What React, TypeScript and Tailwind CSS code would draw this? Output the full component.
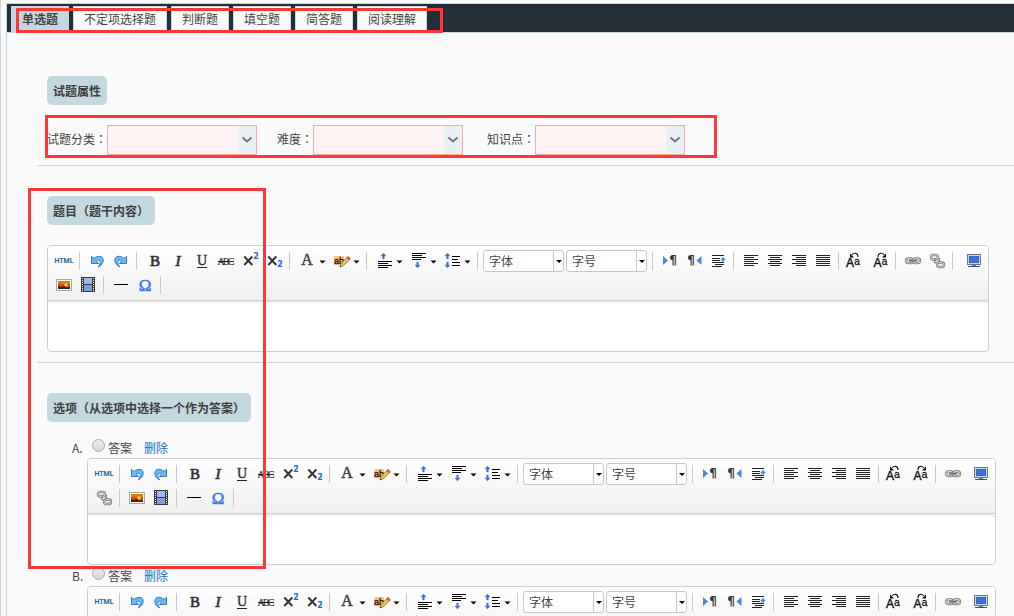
import type { ReactNode } from "react";

const TABS = ["单选题", "不定项选择题", "判断题", "填空题", "简答题", "阅读理解"];

const SERIF = '"Liberation Serif", serif';
const SANS = '"Liberation Sans", sans-serif';
const DEJAVU = '"DejaVu Sans", sans-serif';
const INK = "#333";

function Glyph({ children, crisp, wide }: { children: ReactNode; crisp?: boolean; wide?: boolean }) {
  return (
    <svg
      width={wide ? 34 : 24}
      height={24}
      viewBox={wide ? "0 0 34 24" : "0 0 24 24"}
      fill="none"
      shapeRendering={crisp ? "crispEdges" : undefined}
      aria-hidden="true"
    >
      {children}
      {wide && <path d="M24.500 11.500h6l-3 3z" fill="#000" />}
    </svg>
  );
}

function Lines({ rows, color = "#222" }: { rows: [number, number, number][]; color?: string }) {
  return (
    <>
      {rows.map(([x, y, w]) => (
        <rect key={y} x={x} y={y} width={w} height={1} fill={color} shapeRendering="crispEdges" />
      ))}
    </>
  );
}

const arrowUp = (x: number, y: number) => (
  <path d={`M${x} ${y}l2.5 3h-1.7v3h-1.6v-3h-1.7z`} fill="#4471cf" stroke="#4471cf" strokeWidth=".4" />
);
const arrowDown = (x: number, y: number) => (
  <path d={`M${x} ${y}l2.5-3h-1.7v-3h-1.6v3h-1.7z`} fill="#4471cf" stroke="#4471cf" strokeWidth=".4" />
);

const undoShape = (
  <path
    d="M6.500 7.300v7.200h7.200l-2.600-2.200c1.800-1.700 4.600-1.200 4.100 1.200-.2 1.400-.7 2.700-1.900 4.500 3-1.500 4.900-4.200 4.900-6.800 0-4.600-5.300-5.100-9.300-1.700z"
    fill="#6fb6ee"
    stroke="#2b7fc9"
    strokeWidth="1"
    strokeLinejoin="round"
  />
);

type Tool = { name: string; icon: ReactNode; wide?: boolean };

const t = (name: string, icon: ReactNode, crisp = false): Tool => ({
  name,
  icon: <Glyph crisp={crisp}>{icon}</Glyph>,
});
const w = (name: string, icon: ReactNode): Tool => ({ name, wide: true, icon: <Glyph wide>{icon}</Glyph> });

const letter = (s: string, x: number, y: number, size: number, o: Record<string, unknown> = {}) => (
  <text x={x} y={y} fontSize={size} fontFamily={SERIF} fill={INK} textAnchor="middle" {...o}>
    {s}
  </text>
);

const cross = <path d="M6.300 7.500l8 8.500M14.300 7.500l-8 8.500" stroke={INK} strokeWidth="1.900" />;

const chainLink = (x: number, y: number) => (
  <>
    <rect x={x} y={y} width="7" height="4.500" rx="2.200" stroke="#777" strokeWidth="2.400" />
    <rect x={x} y={y} width="7" height="4.500" rx="2.200" stroke="#e6e6e6" strokeWidth=".9" />
  </>
);

const source: Tool = {
  name: "源代码",
  icon: <span className="font-[Roboto,sans-serif] text-[7px] font-bold leading-none text-[#2a6596]">HTML</span>,
};

const history = [
  t("撤销", undoShape),
  t("重做", <g transform="matrix(-1 0 0 1 24 0)">{undoShape}</g>),
];

const textStyles = [
  t("加粗", letter("B", 13, 17, 15, { stroke: INK, strokeWidth: 0.7 })),
  t("斜体", letter("I", 12, 17, 15, { fontStyle: "italic", stroke: INK, strokeWidth: 0.7 })),
  t("下划线", <>{letter("U", 12, 16, 14, { stroke: INK, strokeWidth: 0.4 })}<Lines rows={[[7, 18, 10]]} /></>),
  t(
    "删除线",
    <>
      {letter("A", 7, 16, 10, { stroke: INK, strokeWidth: 0.2 })}
      {letter("B", 12, 16, 10, { stroke: INK, strokeWidth: 0.2 })}
      {letter("C", 17, 16, 10, { stroke: INK, strokeWidth: 0.2 })}
      <Lines rows={[[4, 12, 16]]} />
    </>,
  ),
  t("上标", <>{cross}{letter("2", 18, 10, 8, { fontFamily: DEJAVU, fontWeight: 700, fill: "#2f5fdc" })}</>),
  t("下标", <>{cross}{letter("2", 18, 18, 8, { fontFamily: DEJAVU, fontWeight: 700, fill: "#2f5fdc" })}</>),
];

const colours = [
  w("文字颜色", letter("A", 12, 16, 16, { fill: "#444", stroke: "#444", strokeWidth: 0.5 })),
  w(
    "背景颜色",
    <>
      <rect x="5" y="7" width="10" height="9" fill="#ffc670" />
      {letter("ab", 10, 15, 9, { fontFamily: SANS, stroke: "#111", strokeWidth: 0.3, fill: "#111" })}
      <path d="M11 18l1-3.500 6-6 2.300 2.300-6 6z" fill="#f0c24c" stroke="#80621c" strokeWidth=".7" />
      <path d="M18 8.500l1-1 2.200 2.200-1 1z" fill="#e33" stroke="#c33" strokeWidth=".8" />
      <path d="M11 18l.4-1.600 1.200 1.200z" fill="#222" />
    </>,
  ),
];

const spacing = [
  w("段前距", <>{arrowUp(11.5, 4)}<Lines rows={[[6, 12, 14], [6, 14, 10], [6, 16, 14], [6, 18, 10]]} color="#000" /></>),
  w("段后距", <>{arrowDown(11.5, 19)}<Lines rows={[[6, 4, 14], [6, 6, 10], [6, 8, 14], [6, 10, 9]]} color="#000" /></>),
  w(
    "行间距",
    <>
      {arrowUp(7.5, 4)}
      {arrowDown(7.5, 19)}
      <Lines rows={[[12, 7, 8], [12, 10, 6], [12, 13, 8], [12, 16, 8]]} color="#000" />
    </>,
  ),
];

const direction = [
  t("从左向右", <><path d="M5 7l5 4.500-5 4.500z" fill="#4a86ee" />{letter("¶", 15, 15, 12, { fontFamily: DEJAVU, fontWeight: 700 })}</>),
  t("从右向左", <><path d="M19.500 7l-5 4.500 5 4.500z" fill="#4a86ee" />{letter("¶", 9, 15, 12, { fontFamily: DEJAVU, fontWeight: 700 })}</>),
  t(
    "首行缩进",
    <>
      <Lines rows={[[6, 6, 12], [6, 9, 8], [6, 11, 8], [6, 13, 12], [9, 15, 9], [6, 17, 10]]} />
      <path d="M15 9.500h1.500v-2l3 3-3 3v-2h-1.500z" fill="#4a86ee" />
    </>,
  ),
];

const aligns = [
  t("左对齐", <Lines rows={[[5, 6, 14], [5, 8, 10], [5, 10, 14], [5, 12, 10], [5, 14, 14], [5, 16, 10]]} />),
  t("居中", <Lines rows={[[5, 6, 14], [7, 8, 10], [5, 10, 14], [7, 12, 10], [5, 14, 14], [7, 16, 10]]} />),
  t("右对齐", <Lines rows={[[5, 6, 14], [9, 8, 10], [5, 10, 14], [9, 12, 10], [5, 14, 14], [9, 16, 10]]} />),
  t("两端对齐", <Lines rows={[[5, 6, 14], [5, 8, 14], [5, 10, 14], [5, 12, 14], [5, 14, 14], [5, 16, 14]]} />),
];

const caseLetters = (x: number) => (
  <>
    {letter("A", x, 18, 12, { fontFamily: SANS, fill: "#111", stroke: "#111", strokeWidth: 0.4 })}
    {letter("a", x + 7, 16, 10, { fontFamily: SANS, fill: "#111", stroke: "#111", strokeWidth: 0.3 })}
  </>
);

const cases = [
  t(
    "转大写",
    <>
      {caseLetters(6)}
      <path d="M14 8c0-4.500-4-4.500-6-2" stroke="#111" strokeWidth="1.100" />
      <path d="M6 4.500v4h4z" fill="#111" />
    </>,
  ),
  t(
    "转小写",
    <>
      {caseLetters(9.5)}
      <path d="M10 8c0-4.500 4-4.500 6-2" stroke="#111" strokeWidth="1.100" />
      <path d="M18 4.500v4h-4z" fill="#111" />
    </>,
  ),
];

const link = t("超链接", <>{chainLink(5, 9.5)}{chainLink(12, 9.5)}<path d="M8 11.800h8" stroke="#777" strokeWidth="1.600" /></>);
const unlink = t(
  "取消链接",
  <>
    {chainLink(6, 6)}
    {chainLink(12, 13.5)}
    <path d="M10.500 9l-1 4 2 1.500M14.500 9v2.500l-1.500 2" stroke="#8a8a8a" strokeWidth="1.400" />
  </>,
);

const media = [
  t(
    "图片",
    <>
      <rect x="4.500" y="6.500" width="15" height="11" fill="#fff" stroke="#a9a9a9" />
      <rect x="6" y="8" width="12" height="8" fill="#c45408" />
      <rect x="6" y="8" width="12" height="3" fill="#e27a10" />
      <circle cx="14" cy="12" r="1.700" fill="#ffd75a" />
      <path d="M6 16v-3l3 1 3-1 3 1.500 3-.5v2z" fill="#4b1c06" />
    </>,
  ),
  t(
    "视频",
    <>
      <rect x="5" y="4" width="14" height="15" fill="#3a3a3a" />
      <rect x="8" y="5" width="8" height="6" fill="#a3b8f0" />
      <rect x="8" y="12" width="8" height="6" fill="#7f9ce6" />
      <path d="M6.500 5v14M17.500 5v14" stroke="#fff" strokeDasharray="1 1" />
    </>,
    true,
  ),
];

const inserts = [
  t("分隔线", <Lines rows={[[5, 11, 14]]} color="#000" />),
  t("特殊字符", letter("Ω", 12, 18, 17, { fill: "#3d74ea", stroke: "#3d74ea", strokeWidth: 0.5 })),
];

const fullscreen = t(
  "全屏",
  <>
    <rect x="5.500" y="5.500" width="13" height="10" fill="#fff" stroke="#60779f" />
    <rect x="7" y="7" width="10" height="7" fill="#3f6fd6" stroke="#2b4c9b" strokeWidth=".5" />
    <rect x="10" y="16" width="4" height="1" fill="#60779f" />
    <rect x="6" y="17" width="12" height="1" fill="#34508f" />
  </>,
);

function ToolButton({ tool }: { tool: Tool }) {
  return (
    <button
      type="button"
      aria-label={tool.name}
      className={`flex h-6 items-center justify-center ${tool.wide ? "w-[34px]" : "w-6"}`}
    >
      {tool.icon}
    </button>
  );
}

function Group({ tools }: { tools: Tool[] }) {
  return (
    <>
      {tools.map((tool) => (
        <ToolButton key={tool.name} tool={tool} />
      ))}
    </>
  );
}

function Sep() {
  return <span className="my-[3px] ml-[3px] mr-[5px] h-[18px] w-px bg-[#c9c9c9]" />;
}

function Combo({ label }: { label: string }) {
  return (
    <span className="relative mr-0.5 flex h-6 items-center">
      <select
        aria-label={label}
        className="h-[22px] w-[81px] appearance-none rounded-[3px] border border-[#c8c8c8] bg-white pl-[5px] text-xs text-[#444]"
      >
        <option>{label}</option>
      </select>
      <svg className="pointer-events-none absolute right-px top-0.5" width="10" height="20" aria-hidden="true">
        <path d="M0 0h1v20h-1z" fill="#c8c8c8" />
        <path d="M3 9h6l-3 3z" fill="#000" />
      </svg>
    </span>
  );
}

function Editor({ label }: { label: string }) {
  return (
    <div className="overflow-hidden rounded border border-[#cfcfcf] bg-white">
      <div
        role="toolbar"
        aria-label={label}
        className="relative flex items-start border-b border-[#cfcfcf] bg-gradient-to-b from-white to-[#efefef] py-[3px] pl-1 pr-0.5 shadow-[0_1px_3px_rgba(0,0,0,0.15)]"
      >
        <div className="flex min-w-0 flex-1 flex-wrap items-center">
          <ToolButton tool={source} />
          <Sep />
          <Group tools={history} />
          <Sep />
          <Group tools={textStyles} />
          <Sep />
          <Group tools={colours} />
          <Sep />
          <Group tools={spacing} />
          <Sep />
          <Combo label="字体" />
          <Combo label="字号" />
          <Sep />
          <Group tools={direction} />
          <Sep />
          <Group tools={aligns} />
          <Sep />
          <Group tools={cases} />
          <Sep />
          <ToolButton tool={link} />
          <ToolButton tool={unlink} />
          <Sep />
          <Group tools={media} />
          <Sep />
          <Group tools={inserts} />
          <Sep />
        </div>
        <ToolButton tool={fullscreen} />
      </div>
      <textarea aria-label={label} className="block h-[50px] w-full resize-none bg-transparent px-2 py-1 outline-none" />
    </div>
  );
}

function Heading({ children }: { children: ReactNode }) {
  return (
    <h2 className="w-fit rounded-[5px] bg-[#c3d9df] px-1.5 text-xs font-bold leading-[29px] text-[#404040]">
      {children}
    </h2>
  );
}

function Field({ id, label, className = "" }: { id: string; label: string; className?: string }) {
  return (
    <div className={`flex items-center ${className}`}>
      <label htmlFor={id} className="pb-0.5">
        {label}
        <span className="font-['Noto_Sans_CJK_TC',sans-serif]">：</span>
      </label>
      <div className="relative">
        <select
          id={id}
          className="block h-[30px] w-[150px] appearance-none border border-[#ffa8a8] bg-[#fff3f3] px-1"
        >
          <option value="" />
        </select>
        <span className="pointer-events-none absolute inset-y-px right-px flex w-[18px] items-center justify-center bg-[#e8f0f4]">
          <svg width="12" height="8" viewBox="0 0 12 8" fill="none" aria-hidden="true">
            <path d="M1.500 1.500l4.500 4 4.500-4" stroke="#777" strokeWidth="2" />
          </svg>
        </span>
      </div>
    </div>
  );
}

export default function App() {
  return (
    <div className="relative h-screen overflow-hidden border-l border-[#c3d9df] bg-[#fafafa] pl-[5px] pt-[3px] font-['Noto_Sans_CJK_SC',sans-serif] text-xs text-[#444]">
      <div className="min-h-full border-l border-t border-[#c3d9df]">
        <nav role="tablist" className="flex h-[29px] gap-1 border-b border-[#c3d9df] bg-[#232e37] pl-1 pt-0.5">
          {TABS.map((tab, i) => (
            <button
              key={tab}
              type="button"
              role="tab"
              aria-selected={i === 0}
              className={`border border-b-0 border-[#c3d9df] px-2.5 pb-0.5 ${
                i === 0 ? "bg-[#c3d9df] font-bold" : "bg-[#fafafa]"
              }`}
            >
              {tab}
            </button>
          ))}
        </nav>

        <main className="pl-[30px]">
          <section className="border-b border-[#c3d9df] pb-2.5 pl-2.5 pt-[43px]">
            <Heading>试题属性</Heading>
            <div className="mt-5 flex">
              <Field id="category" label="试题分类" />
              <Field id="difficulty" label="难度" className="ml-5" />
              <Field id="topic" label="知识点" className="ml-6" />
            </div>
          </section>

          <section className="border-b border-[#c3d9df] pb-2.5 pl-2.5 pr-[25px] pt-[30px]">
            <Heading>题目（题干内容）</Heading>
            <div className="mt-5">
              <Editor label="题目" />
            </div>
          </section>

          <section className="pl-2.5 pr-[18px] pt-[30px]">
            <Heading>选项（从选项中选择一个作为答案）</Heading>
            <ol className="mt-[15px] pl-10">
              {["A", "B"].map((key) => (
                <li key={key}>
                  <div className="-ml-[15px] flex h-[21px] items-center">
                    <span className="w-5">{key}.</span>
                    <input
                      id={`answer-${key}`}
                      type="radio"
                      name="answer"
                      className="mb-1 mr-[3px] size-[13px] appearance-none rounded-full border border-[#ababab] bg-gradient-to-b from-[#eee] to-[#d6d6d6]"
                    />
                    <label htmlFor={`answer-${key}`}>答案</label>
                    <a href="#" className="ml-3 text-[#1874c4]">
                      删除
                    </a>
                  </div>
                  <Editor label={`选项${key}`} />
                </li>
              ))}
            </ol>
          </section>
        </main>
      </div>

      <div className="pointer-events-none absolute left-[15px] top-2 h-[25px] w-[427px] border-[3px] border-[#ff3737]" />
      <div className="pointer-events-none absolute left-11 top-[115px] h-[43px] w-[672px] border-[3px] border-[#ff3737]" />
      <div className="pointer-events-none absolute left-[27px] top-[188px] h-[381px] w-[238px] border-[3px] border-[#ff3737]" />
    </div>
  );
}
